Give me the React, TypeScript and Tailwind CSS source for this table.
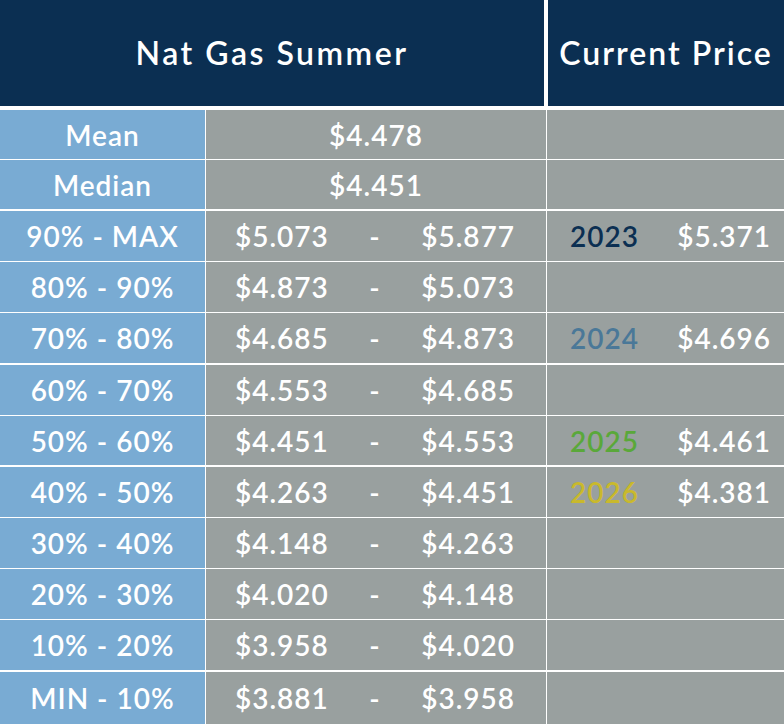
const font = { fontFamily: '"Lato", "Liberation Sans", sans-serif' };

type Row = {
  label: string;
  low?: string;
  high?: string;
  single?: string;
  year?: string;
  yearColor?: string;
  price?: string;
  h: string;
  gap: string;
};

const rows: Row[] = [
  { label: "Mean", single: "$4.478", h: "h-[49px]", gap: "mt-0" },
  { label: "Median", single: "$4.451", h: "h-[49px]", gap: "mt-px" },
  { label: "90% - MAX", low: "$5.073", high: "$5.877", year: "2023", yearColor: "text-[#0b2f52]", price: "$5.371", h: "h-[50px]", gap: "mt-[2px]" },
  { label: "80% - 90%", low: "$4.873", high: "$5.073", h: "h-[50px]", gap: "mt-px" },
  { label: "70% - 80%", low: "$4.685", high: "$4.873", year: "2024", yearColor: "text-[#4a7898]", price: "$4.696", h: "h-[50px]", gap: "mt-px" },
  { label: "60% - 70%", low: "$4.553", high: "$4.685", h: "h-[50px]", gap: "mt-[2px]" },
  { label: "50% - 60%", low: "$4.451", high: "$4.553", year: "2025", yearColor: "text-[#5aa83a]", price: "$4.461", h: "h-[49px]", gap: "mt-px" },
  { label: "40% - 50%", low: "$4.263", high: "$4.451", year: "2026", yearColor: "text-[#c9b92c]", price: "$4.381", h: "h-[50px]", gap: "mt-[2px]" },
  { label: "30% - 40%", low: "$4.148", high: "$4.263", h: "h-[50px]", gap: "mt-px" },
  { label: "20% - 30%", low: "$4.020", high: "$4.148", h: "h-[50px]", gap: "mt-px" },
  { label: "10% - 20%", low: "$3.958", high: "$4.020", h: "h-[50px]", gap: "mt-px" },
  { label: "MIN - 10%", low: "$3.881", high: "$3.958", h: "h-[52px]", gap: "mt-[2px]" },
];

export default function App() {
  return (
    <div className="w-[784px] h-[724px] bg-white overflow-hidden text-white" style={font}>
      <div className="flex h-[106px] gap-[4px]">
        <div className="w-[544px] bg-[#0b2f52] flex items-center justify-center text-[32px] font-semibold tracking-[2.5px]">
          Nat Gas Summer
        </div>
        <div className="flex-1 bg-[#0b2f52] flex items-center justify-center text-[32px] font-semibold tracking-[2px]">
          Current Price
        </div>
      </div>

      <div className="mt-[4px] flex flex-col text-[28px] font-semibold leading-none tracking-[1px]">
        {rows.map((r) => (
          <div key={r.label} className={`flex gap-px ${r.h} ${r.gap}`}>
            <div className="w-[205px] bg-[#79abd3] flex items-center justify-center">{r.label}</div>
            <div className="w-[340px] bg-[#99a09f] flex items-center">
              {r.single ? (
                <span className="w-full text-center">{r.single}</span>
              ) : (
                <div className="w-full flex items-center justify-between pl-[29px] pr-[31px]">
                  <span>{r.low}</span>
                  <span>-</span>
                  <span>{r.high}</span>
                </div>
              )}
            </div>
            <div className="flex-1 bg-[#99a09f] flex items-center justify-between pl-[23px] pr-[13px]">
              {r.year && <span className={r.yearColor}>{r.year}</span>}
              {r.price && <span>{r.price}</span>}
            </div>
          </div>
        ))}
      </div>
    </div>
  );
}
